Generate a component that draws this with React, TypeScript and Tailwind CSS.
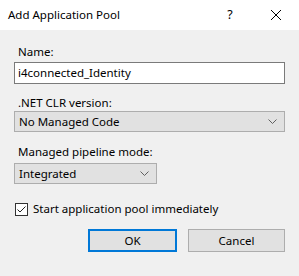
const font = { fontFamily: '"Noto Sans", "Segoe UI", sans-serif' };

function Chevron() {
  return (
    <svg width="9" height="5" viewBox="0 0 9 5" className="shrink-0">
      <path d="M0.5 0.5 L4.5 4.5 L8.5 0.5" fill="none" stroke="#606060" strokeWidth="1" />
    </svg>
  );
}

function Combo({ value, className }: { value: string; className: string }) {
  return (
    <div
      className={`flex h-[21px] items-center justify-between border border-[#adadad] bg-[#e1e1e1] pl-[4px] pr-[7px] leading-none text-black ${className}`}
    >
      <span>{value}</span>
      <Chevron />
    </div>
  );
}

export default function App() {
  return (
    <div className="flex h-[276px] w-[299px] flex-col bg-[#f0f0f0] text-[11.5px] text-black" style={font}>
      <div className="flex h-[30px] items-center bg-white pl-[8px]">
        <span className="flex-1">Add Application Pool</span>
        <span className="w-[46px] text-center text-[12.5px]">?</span>
        <div className="flex w-[46px] items-center justify-center">
          <svg width="10" height="10" viewBox="0 0 10 10">
            <path d="M0 0 L10 10 M10 0 L0 10" stroke="#000" strokeWidth="1" />
          </svg>
        </div>
      </div>

      <div className="flex flex-col px-[14px] pt-[14px]">
        <label className="pl-[4px] leading-[16px]">Name:</label>
        <div className="mt-[2px] flex h-[22px] items-center border border-[#7a7a7a] bg-white pl-[3px] leading-none">
          i4connected_Identity
        </div>

        <label className="mt-[11px] pl-[4px] leading-[16px]">.NET CLR version:</label>
        <Combo value="No Managed Code" className="w-full" />

        <label className="mt-[12px] pl-[4px] leading-[16px]">Managed pipeline mode:</label>
        <Combo value="Integrated" className="mt-[3px] w-[143px]" />

        <div className="mt-[17px] flex items-center gap-[5px] pl-[1px]">
          <div className="flex h-[13px] w-[13px] items-center justify-center border border-[#333333] bg-white">
            <svg width="11" height="11" viewBox="0 0 11 11">
              <path d="M1.5 5.5 L4 8 L9.5 2.5" fill="none" stroke="#222" strokeWidth="1" />
            </svg>
          </div>
          <span className="leading-[16px]">Start application pool immediately</span>
        </div>

        <div className="mt-[12px] flex justify-end gap-[11px]">
          <button className="h-[23px] w-[89px] border-2 border-[#0078d7] bg-[#e1e1e1] leading-none">
            OK
          </button>
          <button className="h-[23px] w-[97px] border border-[#adadad] bg-[#e1e1e1] leading-none">
            Cancel
          </button>
        </div>
      </div>
    </div>
  );
}
